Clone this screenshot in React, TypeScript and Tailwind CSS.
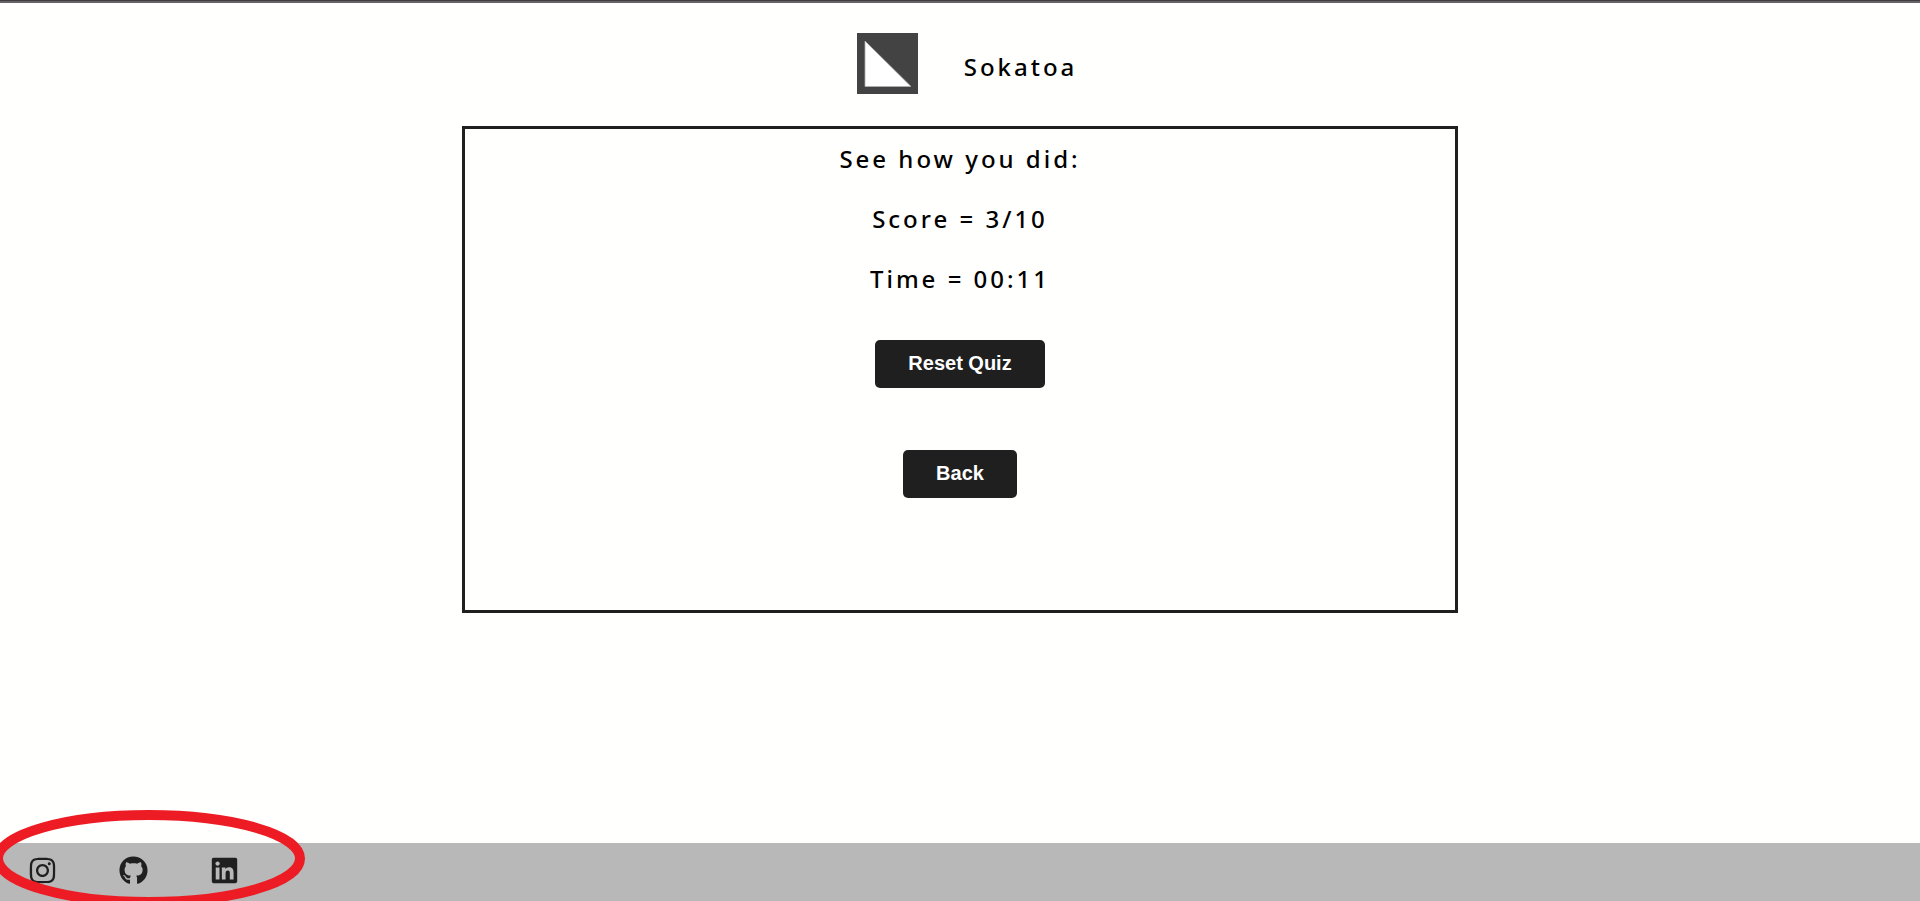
import React from "react";
import { FaInstagram, FaGithub, FaLinkedin } from "react-icons/fa";

const links = [
  { label: "Instagram", href: "#instagram", Icon: FaInstagram },
  { label: "GitHub", href: "#github", Icon: FaGithub },
  { label: "LinkedIn", href: "#linkedin", Icon: FaLinkedin },
];

function Logo() {
  return (
    <svg viewBox="0 0 61 61" className="size-[61px]" aria-hidden="true">
      <rect width="61" height="61" fill="#434343" />
      <path d="M8 8 L54 53.5 H8 Z" fill="#ffffff" stroke="#b0b0b0" strokeWidth="0.8" />
    </svg>
  );
}

function QuizButton({ children }: { children: React.ReactNode }) {
  return (
    <button
      type="button"
      className="h-12 cursor-pointer rounded-[5px] bg-[#1f1f1f] px-[33px] pb-0.5 font-['Liberation_Sans',Arial,sans-serif] text-xl font-bold text-white"
    >
      {children}
    </button>
  );
}

export default function App() {
  return (
    <div className="relative flex min-h-screen flex-col overflow-hidden bg-[#fffffd] font-['Noto_Sans','Open_Sans',sans-serif] text-black">
      <div className="h-[3px] border-t border-[#3f3d3f] bg-[#656365]" />

      <header className="flex items-center justify-center gap-[46px] pt-[30px] pb-8 pl-3.5">
        <Logo />
        <h1 className="pt-1.5 text-2xl font-medium tracking-[3px]">Sokatoa</h1>
      </header>

      <main className="mx-auto box-content flex min-h-[481px] w-1/2 flex-col items-center border-[3px] border-[#1f1f1f] px-[15px]">
        <div className="mt-[14px] flex flex-col items-center gap-7 text-2xl font-medium tracking-[3px]">
          <h2>See how you did:</h2>
          <p>Score = 3/10</p>
          <p>Time = 00:11</p>
        </div>
        <div className="mt-[45px] flex flex-col items-center gap-[62px]">
          <QuizButton>Reset Quiz</QuizButton>
          <QuizButton>Back</QuizButton>
        </div>
      </main>

      <footer className="mt-auto flex h-[58px] items-center gap-[62px] bg-[#b8b8b8] px-7 pb-[3px] text-[#1f1f1f]">
        {links.map(({ label, href, Icon }) => (
          <a key={label} href={href} aria-label={label}>
            <Icon className="size-[29px]" />
          </a>
        ))}
      </footer>

      <svg
        viewBox="0 0 314 97"
        className="pointer-events-none absolute -bottom-1.5 -left-2 h-[97px] w-[314px]"
        aria-hidden="true"
      >
        <ellipse cx="157" cy="48.5" rx="151" ry="43.5" fill="none" stroke="#ed1c24" strokeWidth="10" />
      </svg>
    </div>
  );
}
